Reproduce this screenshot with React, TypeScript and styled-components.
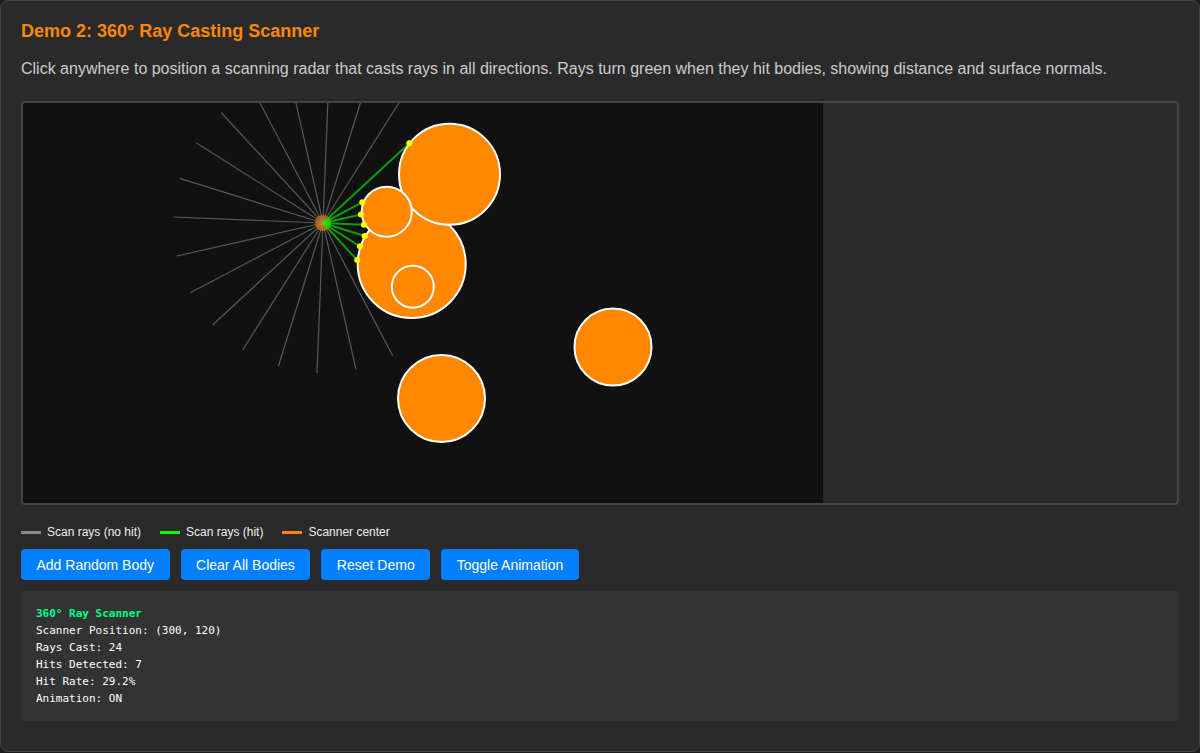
import styled, { createGlobalStyle } from "styled-components";

const GlobalStyle = createGlobalStyle`
  html, body {
    margin: 0;
    padding: 0;
    background: #1a1a1a;
  }
  * {
    box-sizing: border-box;
  }
`;

const DemoCard = styled.div`
  width: 1200px;
  background: #2a2a2a;
  border: 1px solid #444;
  border-radius: 8px;
  padding: 20px;
  font-family: "Liberation Sans", Arial, sans-serif;
`;

const Title = styled.h3`
  margin: 0 0 18px;
  color: #ff8800;
  font-size: 18px;
  font-weight: bold;
`;

const Description = styled.p`
  margin: 0 0 23px;
  color: #cccccc;
  font-size: 16px;
`;

const CanvasFrame = styled.div`
  border: 2px solid #444;
  border-radius: 4px;
  overflow: hidden;
`;

const Canvas = styled.svg`
  display: block;
  background: #111;
`;

const Legend = styled.div`
  display: flex;
  align-items: center;
  gap: 19px;
  margin-top: 20px;
  font-size: 12px;
  color: #eee;
`;

const LegendItem = styled.span`
  display: flex;
  align-items: center;
  gap: 6px;
`;

const Swatch = styled.span<{ $color: string }>`
  width: 20px;
  height: 3px;
  background: ${({ $color }) => $color};
`;

const ButtonRow = styled.div`
  display: flex;
  gap: 11px;
  margin-top: 10px;
`;

const Button = styled.button`
  background: #0080ff;
  color: #fff;
  border: none;
  border-radius: 4px;
  padding: 0 15.5px;
  height: 31px;
  font-family: "Liberation Sans", Arial, sans-serif;
  font-size: 14px;
  cursor: pointer;
`;

const InfoPanel = styled.div`
  margin: 11px 0 10px;
  background: #333;
  border-radius: 4px;
  padding: 14px 15px;
  font-family: "DejaVu Sans Mono", "Liberation Mono", monospace;
  font-size: 11px;
  line-height: 17px;
  color: #fff;
`;

const InfoTitle = styled.div`
  color: #00ff88;
  font-weight: bold;
`;

const scanner = { x: 300, y: 120 };

// painted in this order
const bodies = [
  { x: 388.7, y: 161, r: 54 },
  { x: 389.8, y: 183.7, r: 21 },
  { x: 426.5, y: 71.3, r: 50.5 },
  { x: 363.7, y: 108.7, r: 25 },
  { x: 590, y: 244, r: 38.5 },
  { x: 418.5, y: 295.5, r: 43.5 },
];

// ray index -> hit distance
const hits: Record<number, number> = {
  0: 41,
  1: 43.6,
  2: 43.7,
  3: 50.5,
  21: 117.5,
  22: 44.4,
  23: 38.9,
};

const RAY_COUNT = 24;
const RAY_LENGTH = 150;
const START_ANGLE = 2.3;

const rays = Array.from({ length: RAY_COUNT }, (_, i) => {
  const a = ((START_ANGLE + i * 15) * Math.PI) / 180;
  const d = hits[i] ?? RAY_LENGTH;
  return {
    x: scanner.x + Math.cos(a) * d,
    y: scanner.y + Math.sin(a) * d,
    hit: hits[i] !== undefined,
  };
});

function Scanner() {
  return (
    <Canvas width={800} height={400} viewBox="0 0 800 400">
      {bodies.map((b, i) => (
        <circle key={i} cx={b.x} cy={b.y} r={b.r} fill="#ff8800" stroke="#fff" strokeWidth={2} />
      ))}
      {rays
        .filter((r) => !r.hit)
        .map((r, i) => (
          <line key={i} x1={scanner.x} y1={scanner.y} x2={r.x} y2={r.y} stroke="rgba(136,136,136,0.6)" strokeWidth={1.2} />
        ))}
      <circle cx={scanner.x} cy={scanner.y} r={8} fill="rgba(255,136,0,0.55)" />
      {rays
        .filter((r) => r.hit)
        .map((r, i) => (
          <line key={i} x1={scanner.x} y1={scanner.y} x2={r.x} y2={r.y} stroke="rgba(0,255,0,0.6)" strokeWidth={2} />
        ))}
      {rays
        .filter((r) => r.hit)
        .map((r, i) => (
          <circle key={i} cx={r.x} cy={r.y} r={3} fill="#ffff00" />
        ))}
    </Canvas>
  );
}

export default function App() {
  const hitCount = rays.filter((r) => r.hit).length;
  return (
    <>
      <GlobalStyle />
      <DemoCard>
        <Title>Demo 2: 360° Ray Casting Scanner</Title>
        <Description>
          Click anywhere to position a scanning radar that casts rays in all directions. Rays turn green when they hit
          bodies, showing distance and surface normals.
        </Description>
        <CanvasFrame>
          <Scanner />
        </CanvasFrame>
        <Legend>
          <LegendItem>
            <Swatch $color="#888" />
            Scan rays (no hit)
          </LegendItem>
          <LegendItem>
            <Swatch $color="#00ff00" />
            Scan rays (hit)
          </LegendItem>
          <LegendItem>
            <Swatch $color="#ff8800" />
            Scanner center
          </LegendItem>
        </Legend>
        <ButtonRow>
          <Button>Add Random Body</Button>
          <Button>Clear All Bodies</Button>
          <Button>Reset Demo</Button>
          <Button>Toggle Animation</Button>
        </ButtonRow>
        <InfoPanel>
          <InfoTitle>360° Ray Scanner</InfoTitle>
          <div>Scanner Position: (300, 120)</div>
          <div>Rays Cast: {RAY_COUNT}</div>
          <div>Hits Detected: {hitCount}</div>
          <div>Hit Rate: {((hitCount / RAY_COUNT) * 100).toFixed(1)}%</div>
          <div>Animation: ON</div>
        </InfoPanel>
      </DemoCard>
    </>
  );
}
